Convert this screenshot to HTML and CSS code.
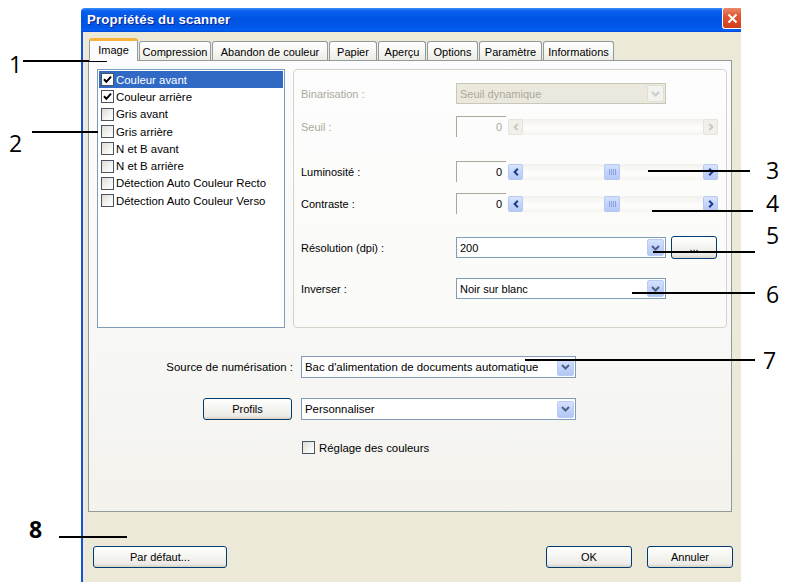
FILE: index.html
```html
<!DOCTYPE html>
<html lang="fr">
<head>
<meta charset="utf-8">
<title>Propriétés du scanner</title>
<link rel="stylesheet" href="styles.css">
</head>
<body>
<div class="window">
  <div class="titlebar">
    <span class="title">Propriétés du scanner</span>
    <span class="close"><svg width="11" height="11" viewBox="0 0 11 11"><path d="M1.5 1.5 L9.5 9.5 M9.5 1.5 L1.5 9.5" stroke="#fff" stroke-width="2" fill="none"/></svg></span>
  </div>
  <div class="client">
    <div class="tabs">
      <div class="tab active t-image">Image</div>
      <div class="tab t-comp">Compression</div>
      <div class="tab t-aband">Abandon de couleur</div>
      <div class="tab t-papier">Papier</div>
      <div class="tab t-apercu">Aperçu</div>
      <div class="tab t-options">Options</div>
      <div class="tab t-param">Paramètre</div>
      <div class="tab t-info">Informations</div>
    </div>
    <div class="panel">
      <div class="top">
        <ul class="list">
          <li class="item selected"><span class="cb checked"><svg width="9" height="9" viewBox="0 0 9 9"><path d="M1 4.2 L3.4 6.8 L8 1.6" fill="none" stroke="#000" stroke-width="2"/></svg></span>Couleur avant</li>
          <li class="item"><span class="cb checked"><svg width="9" height="9" viewBox="0 0 9 9"><path d="M1 4.2 L3.4 6.8 L8 1.6" fill="none" stroke="#000" stroke-width="2"/></svg></span>Couleur arrière</li>
          <li class="item"><span class="cb"></span>Gris avant</li>
          <li class="item"><span class="cb"></span>Gris arrière</li>
          <li class="item"><span class="cb"></span>N et B avant</li>
          <li class="item"><span class="cb"></span>N et B arrière</li>
          <li class="item"><span class="cb"></span>Détection Auto Couleur Recto</li>
          <li class="item"><span class="cb"></span>Détection Auto Couleur Verso</li>
        </ul>
        <div class="group">
          <div class="row r-bin disabled">
            <span class="label">Binarisation :</span>
            <div class="combo combo-disabled"><span class="ctext">Seuil dynamique</span><span class="cbtn"><svg width="9" height="6" viewBox="0 0 9 6"><path d="M1 1 L4.5 4.5 L8 1" fill="none" stroke="#C9CCD6" stroke-width="2"/></svg></span></div>
          </div>
          <div class="row r-seuil disabled">
            <span class="label">Seuil :</span>
            <div class="num-edit">0</div>
            <div class="scroll">
              <span class="sarrow sdis"><svg width="6" height="8" viewBox="0 0 6 8"><path d="M4.8 0.8 L1.6 4 L4.8 7.2" fill="none" stroke="#C8C7BD" stroke-width="1.8"/></svg></span>
              <span class="track"></span>
              <span class="sarrow sdis"><svg width="6" height="8" viewBox="0 0 6 8"><path d="M1.2 0.8 L4.4 4 L1.2 7.2" fill="none" stroke="#C8C7BD" stroke-width="1.8"/></svg></span>
            </div>
          </div>
          <div class="row r-lum">
            <span class="label">Luminosité :</span>
            <div class="num-edit">0</div>
            <div class="scroll">
              <span class="sarrow"><svg width="6" height="8" viewBox="0 0 6 8"><path d="M4.8 0.8 L1.6 4 L4.8 7.2" fill="none" stroke="#1E3A8A" stroke-width="2"/></svg></span>
              <span class="track"><span class="thumb"><i></i><i></i><i></i><i></i></span></span>
              <span class="sarrow"><svg width="6" height="8" viewBox="0 0 6 8"><path d="M1.2 0.8 L4.4 4 L1.2 7.2" fill="none" stroke="#1E3A8A" stroke-width="2"/></svg></span>
            </div>
          </div>
          <div class="row r-con">
            <span class="label">Contraste :</span>
            <div class="num-edit">0</div>
            <div class="scroll">
              <span class="sarrow"><svg width="6" height="8" viewBox="0 0 6 8"><path d="M4.8 0.8 L1.6 4 L4.8 7.2" fill="none" stroke="#1E3A8A" stroke-width="2"/></svg></span>
              <span class="track"><span class="thumb"><i></i><i></i><i></i><i></i></span></span>
              <span class="sarrow"><svg width="6" height="8" viewBox="0 0 6 8"><path d="M1.2 0.8 L4.4 4 L1.2 7.2" fill="none" stroke="#1E3A8A" stroke-width="2"/></svg></span>
            </div>
          </div>
          <div class="row r-res">
            <span class="label">Résolution (dpi) :</span>
            <div class="combo"><span class="ctext">200</span><span class="cbtn"><svg width="9" height="6" viewBox="0 0 9 6"><path d="M1 1 L4.5 4.5 L8 1" fill="none" stroke="#4D6185" stroke-width="2"/></svg></span></div>
            <button class="btn dots">...</button>
          </div>
          <div class="row r-inv">
            <span class="label">Inverser :</span>
            <div class="combo"><span class="ctext">Noir sur blanc</span><span class="cbtn"><svg width="9" height="6" viewBox="0 0 9 6"><path d="M1 1 L4.5 4.5 L8 1" fill="none" stroke="#4D6185" stroke-width="2"/></svg></span></div>
          </div>
        </div>
      </div>
      <div class="bottom">
        <div class="frow f-source">
          <span class="flabel">Source de numérisation :</span>
          <div class="combo wide"><span class="ctext">Bac d'alimentation de documents automatique</span><span class="cbtn"><svg width="9" height="6" viewBox="0 0 9 6"><path d="M1 1 L4.5 4.5 L8 1" fill="none" stroke="#4D6185" stroke-width="2"/></svg></span></div>
        </div>
        <div class="frow f-profils">
          <span class="flabel"><button class="btn profils">Profils</button></span>
          <div class="combo wide"><span class="ctext">Personnaliser</span><span class="cbtn"><svg width="9" height="6" viewBox="0 0 9 6"><path d="M1 1 L4.5 4.5 L8 1" fill="none" stroke="#4D6185" stroke-width="2"/></svg></span></div>
        </div>
        <div class="frow f-check">
          <span class="flabel"></span>
          <span class="cb"></span><span class="ctext2">Réglage des couleurs</span>
        </div>
      </div>
    </div>
    <div class="buttons">
      <button class="btn b-default">Par défaut...</button>
      <button class="btn b-ok">OK</button>
      <button class="btn b-cancel">Annuler</button>
    </div>
  </div>
</div>

<div class="annotations">
  <span class="num n1">1</span><span class="line l1"></span>
  <span class="num n2">2</span><span class="line l2"></span>
  <span class="num n3">3</span><span class="line l3"></span>
  <span class="num n4">4</span><span class="line l4"></span>
  <span class="num n5">5</span><span class="line l5"></span>
  <span class="num n6">6</span><span class="line l6"></span>
  <span class="num n7">7</span><span class="line l7"></span>
  <span class="num n8">8</span><span class="line l8"></span>
</div>
</body>
</html>
```

FILE: styles.css
```css
* { box-sizing: border-box; }

html, body {
  margin: 0;
  padding: 0;
}

body {
  width: 793px;
  height: 582px;
  overflow: hidden;
  position: relative;
  background: #fff;
  font-family: "Liberation Sans", Arial, sans-serif;
  font-size: 11px;
  color: #000;
}

.window {
  margin: 8px 0 0 81px;
  width: 660px;
  height: 574px;
  display: flex;
  flex-direction: column;
}

/* title bar */
.titlebar {
  height: 24px;
  flex: none;
  display: flex;
  align-items: flex-start;
  padding-left: 6px;
  border-radius: 4px 0 0 0;
  background: linear-gradient(to bottom, #3d8ff7 0%, #0a5ff0 12%, #0054e3 45%, #0057e8 80%, #0061f4 92%, #0046d8 100%);
}

.title {
  color: #fff;
  font-weight: bold;
  font-size: 13.2px;
  line-height: 24px;
  letter-spacing: 0.2px;
  text-shadow: 1px 1px 0 #0a1e8a;
}

.close {
  margin-left: auto;
  width: 19px;
  height: 22px;
  margin-top: -1px;
  border: 1px solid #fff;
  border-right: none;
  border-radius: 3px 0 0 3px;
  background: linear-gradient(to bottom, #e98a6b 0%, #e0552f 40%, #d0401e 100%);
  display: flex;
  align-items: center;
  justify-content: center;
}

/* client area */
.client {
  flex: 1;
  background: #ece9d8;
  border-left: 2px solid #1553d6;
  padding: 6px 0 0 5px;
  display: flex;
  flex-direction: column;
}

.tabs {
  display: flex;
  align-items: flex-end;
  gap: 1px;
  height: 23px;
  margin-bottom: -1px;
  position: relative;
  z-index: 1;
  padding-left: 1px;
}

.tab {
  height: 19px;
  margin-bottom: 1px;
  border: 1px solid #919b9c;
  border-bottom: none;
  border-radius: 3px 3px 0 0;
  background: linear-gradient(to bottom, #ffffff 0%, #f7f7f4 50%, #ecebe4 100%);
  display: flex;
  align-items: center;
  justify-content: center;
  font-size: 11px;
  white-space: nowrap;
  padding-top: 1px;
}

.tab.active {
  height: 23px;
  margin-bottom: 0;
  background: #fcfcfe;
  border-top: 3px solid #f6b43d;
  padding-top: 0;
  padding-bottom: 3px;
  align-items: center;
}

.t-image { width: 49px; }
.t-comp { width: 72px; }
.t-aband { width: 116px; }
.t-papier { width: 48px; }
.t-apercu { width: 48px; }
.t-options { width: 51px; }
.t-param { width: 63px; }
.t-info { width: 71px; }

/* panel */
.panel {
  width: 644px;
  height: 452px;
  flex: none;
  border: 1px solid #919b9c;
  background: linear-gradient(to bottom, #fcfcfe 0%, #f9f9f8 50%, #f3f2ed 100%);
}

.top {
  display: flex;
  gap: 8px;
  padding: 8px 0 0 8px;
}

.list {
  list-style: none;
  margin: 0;
  padding: 1px;
  width: 188px;
  height: 259px;
  border: 1px solid #7f9db9;
  background: #fff;
}

.item {
  height: 17.3px;
  display: flex;
  align-items: center;
  padding-left: 2px;
  white-space: nowrap;
  font-size: 11.4px;
}

.item.selected {
  background: #316ac5;
  color: #fff;
}

.cb {
  width: 13px;
  height: 13px;
  flex: none;
  border: 1px solid #4a5360;
  background: linear-gradient(135deg, #dcdcd6 0%, #f4f4f2 60%, #ffffff 100%);
  margin-right: 2px;
  display: inline-flex;
  align-items: center;
  justify-content: center;
}

.cb.checked { background: #fff; }

/* group box */
.group {
  width: 434px;
  height: 259px;
  border: 1px solid #d6d3c6;
  border-radius: 4px;
  background: linear-gradient(to bottom, #fdfdfd 0%, #fafaf8 100%);
  padding: 13px 0 0 6px;
}

.row {
  display: flex;
  align-items: center;
  height: 21px;
}

.r-seuil { margin-top: 12px; }
.r-lum { margin-top: 24px; }
.r-con { margin-top: 11px; }
.r-res { margin-top: 23px; }
.r-inv { margin-top: 20px; }

.label {
  width: 156px;
  flex: none;
  padding-left: 1px;
}

.disabled .label { color: #aca899; }

/* combo boxes */
.combo {
  width: 210px;
  height: 21px;
  border: 1px solid #7f9db9;
  background: #fff;
  display: flex;
  align-items: center;
  padding: 1px;
}

.ctext {
  flex: 1;
  padding-left: 2px;
  white-space: nowrap;
  overflow: hidden;
}

.cbtn {
  width: 17px;
  height: 17px;
  flex: none;
  border: 1px solid #b9cbf5;
  border-radius: 2px;
  background: linear-gradient(to bottom, #d6e2fc 0%, #c1d3fb 50%, #b3c7f4 100%);
  display: flex;
  align-items: center;
  justify-content: center;
}

.combo-disabled {
  background: #ebe9dd;
  border-color: #c9c7ba;
}
.combo-disabled .ctext { color: #aca899; }
.combo-disabled .cbtn {
  background: #f3f2ec;
  border-color: #e1e0d8;
}

/* number edit + scrollbar */
.num-edit {
  width: 50px;
  height: 21px;
  flex: none;
  border-top: 1px solid #aca899;
  border-left: 1px solid #aca899;
  text-align: right;
  padding-right: 4px;
  line-height: 20px;
  background: transparent;
}

.disabled .num-edit { color: #aca899; }

.scroll {
  width: 210px;
  height: 16px;
  margin-left: 2px;
  display: flex;
  background: linear-gradient(to bottom, #f3f1ec 0%, #fefefe 60%, #f5f4ef 100%);
}

.sarrow {
  width: 15px;
  height: 16px;
  flex: none;
  border: 1px solid #b4c8f6;
  border-radius: 2px;
  background: linear-gradient(to bottom, #dbe6fd 0%, #c4d5fa 50%, #b6c9f5 100%);
  display: flex;
  align-items: center;
  justify-content: center;
}

.sarrow.sdis {
  border-color: #e5e4dc;
  background: #f1f0ea;
}

.track {
  flex: 1;
  position: relative;
  display: flex;
  padding-left: 81px;
}

.thumb {
  width: 16px;
  height: 16px;
  border: 1px solid #b4c8f6;
  border-radius: 2px;
  background: linear-gradient(to bottom, #d4e1fc 0%, #c1d3fb 50%, #b6c9f5 100%);
  display: flex;
  align-items: center;
  justify-content: center;
  gap: 1px;
}

.thumb i {
  display: block;
  width: 1px;
  height: 6px;
  background: #8ca5e1;
}

.btn {
  font-family: "Liberation Sans", Arial, sans-serif;
  font-size: 11px;
  color: #000;
  border: 1px solid #003c74;
  border-radius: 3px;
  background: linear-gradient(to bottom, #ffffff 0%, #f6f6f3 40%, #ecebe6 85%, #d6d0c5 100%);
  padding: 0;
  height: 22px;
}

.dots {
  width: 46px;
  height: 23px;
  margin-left: 5px;
  line-height: 15px;
}

/* bottom form */
.bottom {
  padding-top: 28px;
}

.frow {
  display: flex;
  align-items: center;
}

.flabel {
  width: 212px;
  flex: none;
  text-align: right;
  padding-right: 8px;
  display: flex;
  justify-content: flex-end;
  font-size: 11.4px;
}

.combo.wide {
  width: 275px;
  height: 22px;
  font-size: 11.4px;
}

.f-profils { margin-top: 20px; }
.f-profils .flabel { padding-right: 9px; }

.profils {
  width: 89px;
  height: 22px;
}

.f-check { margin-top: 21px; font-size: 11.4px; }
.f-check .flabel { width: 213px; }
.f-check .cb { margin-right: 4px; }

/* bottom buttons */
.buttons {
  display: flex;
  margin-top: 34px;
  padding-left: 5px;
}

.b-default { width: 134px; }
.b-ok { width: 86px; margin-left: 319px; }
.b-cancel { width: 86px; margin-left: 15px; }

/* annotations overlay */
.annotations {
  position: absolute;
  left: 0;
  top: 0;
  width: 793px;
  height: 582px;
  pointer-events: none;
}

.num {
  position: absolute;
  font-family: "Open Sans", "Noto Sans", sans-serif;
  font-size: 23px;
  line-height: 23px;
  font-weight: 500;
  color: #000;
}

.line {
  position: absolute;
  height: 2px;
  background: #000;
}

.n1 { left: 9px; top: 53px; }
.n2 { left: 9px; top: 132px; }
.n3 { left: 766px; top: 159px; }
.n4 { left: 766px; top: 192px; }
.n5 { left: 766px; top: 224px; }
.n6 { left: 766px; top: 283px; }
.n7 { left: 763px; top: 349px; }
.n8 { left: 29px; top: 518px; font-weight: 700; }

.l1 { left: 23px; top: 60px; width: 84px; }
.l2 { left: 32px; top: 131px; width: 66px; }
.l3 { left: 648px; top: 170px; width: 102px; }
.l4 { left: 652px; top: 210px; width: 101px; }
.l5 { left: 653px; top: 251px; width: 102px; }
.l6 { left: 632px; top: 292px; width: 123px; }
.l7 { left: 525px; top: 359px; width: 230px; }
.l8 { left: 59px; top: 536px; width: 68px; }
```
